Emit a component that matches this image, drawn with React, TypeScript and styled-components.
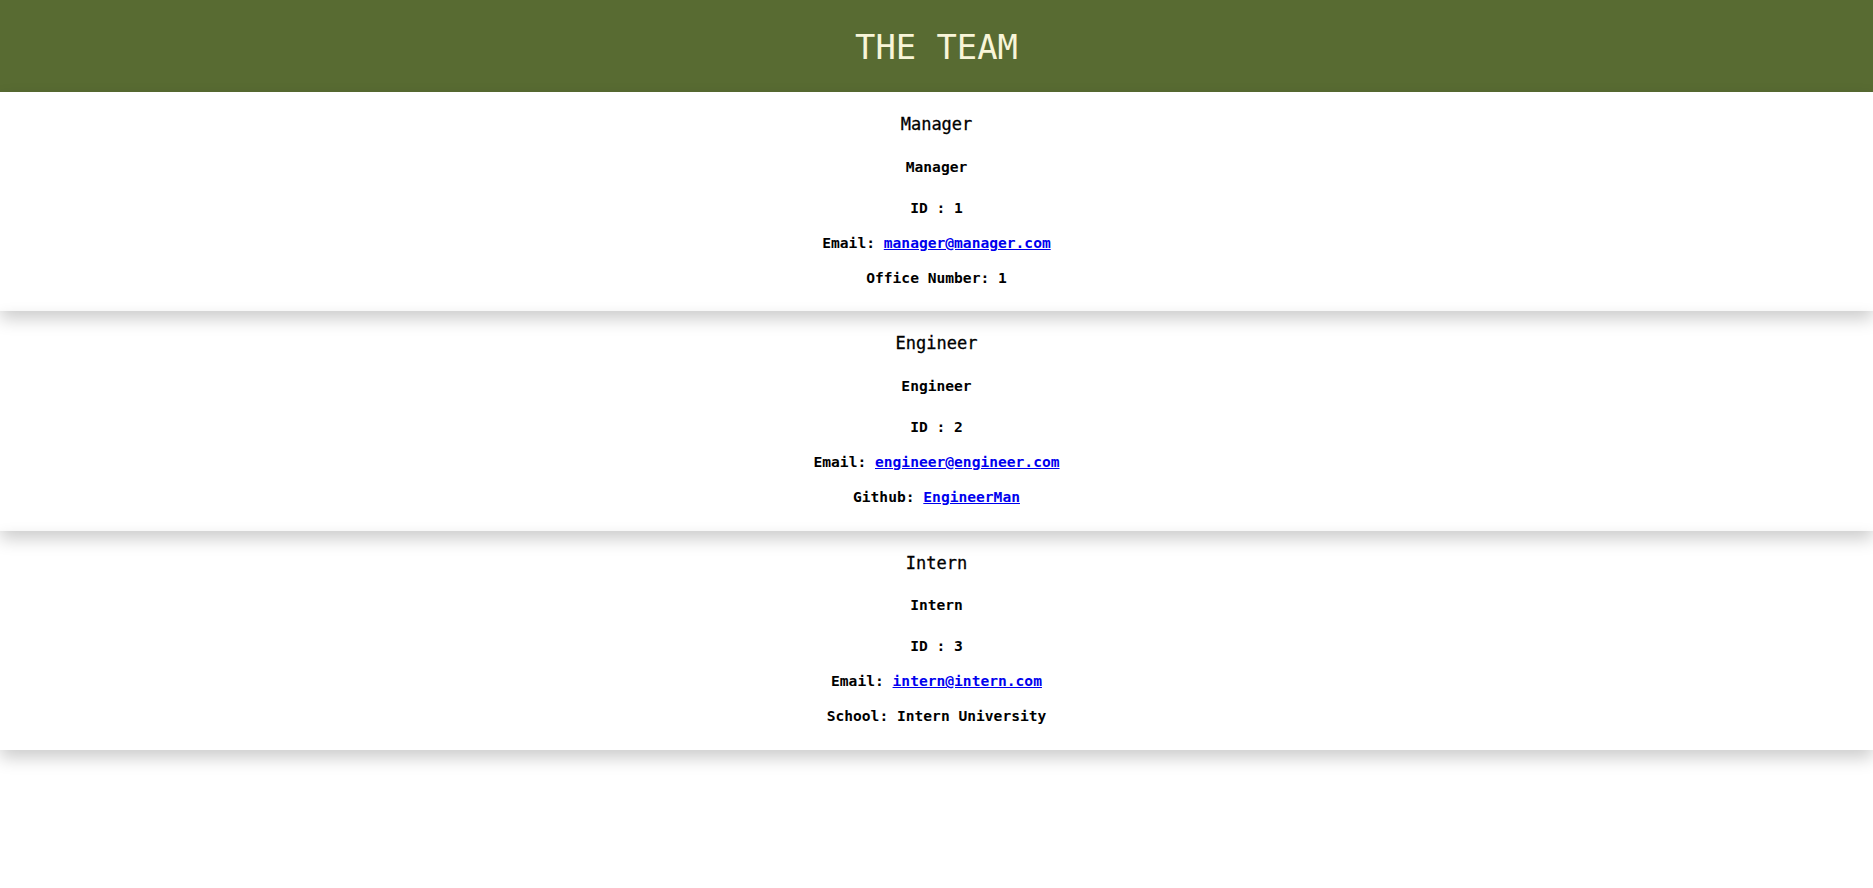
import React from "react";
import styled, { createGlobalStyle } from "styled-components";

const Global = createGlobalStyle`
  html, body { margin: 0; padding: 0; background: #ffffff; }
  body {
    font-family: "DejaVu Sans Mono", "Liberation Mono", monospace;
    color: #000;
    min-height: 100vh;
  }
`;

const Page = styled.div`
  min-height: 100vh;
  display: flex;
  flex-direction: column;
`;

const Header = styled.header`
  background: #586b32;
  height: 92px;
  flex-shrink: 0;
  display: flex;
  align-items: center;
  justify-content: center;
`;

const Title = styled.h1`
  margin: 0;
  font-size: 33.8px;
  font-weight: normal;
  color: #f8f5d8;
  padding-top: 2px;
`;

const List = styled.main`
  display: flex;
  flex-direction: column;
  padding-bottom: 40px;
`;

const Card = styled.section`
  height: 219.3px;
  box-sizing: border-box;
  padding-top: 21px;
  display: flex;
  flex-direction: column;
  align-items: center;
  box-shadow: 0 8px 16px 0 rgba(0, 0, 0, 0.2);
  text-align: center;
`;

const Name = styled.h2`
  margin: 0;
  font-size: 17px;
  line-height: 22px;
  font-weight: normal;
  -webkit-text-stroke: 0.3px #000;
`;

const Role = styled.h3`
  margin: 21.5px 0 0;
  font-size: 14.6px;
  line-height: 19px;
  font-weight: bold;
`;

const Line = styled.p<{ $gap?: number }>`
  margin: ${(p) => p.$gap ?? 16}px 0 0;
  font-size: 14.6px;
  line-height: 19px;
  font-weight: bold;
`;

const Link = styled.a`
  color: #0000ee;
  text-decoration: underline;
`;

type Member = {
  name: string;
  role: string;
  id: number;
  email: string;
  extra: React.ReactNode;
};

const members: Member[] = [
  {
    name: "Manager",
    role: "Manager",
    id: 1,
    email: "manager@manager.com",
    extra: <>Office Number: 1</>,
  },
  {
    name: "Engineer",
    role: "Engineer",
    id: 2,
    email: "engineer@engineer.com",
    extra: (
      <>
        Github: <Link href="#">EngineerMan</Link>
      </>
    ),
  },
  {
    name: "Intern",
    role: "Intern",
    id: 3,
    email: "intern@intern.com",
    extra: <>School: Intern University</>,
  },
];

export default function App() {
  return (
    <Page>
      <Global />
      <Header>
        <Title>THE TEAM</Title>
      </Header>
      <List>
        {members.map((m) => (
          <Card key={m.id}>
            <Name>{m.name}</Name>
            <Role>{m.role}</Role>
            <Line $gap={22}>ID : {m.id}</Line>
            <Line>
              Email: <Link href={`mailto:${m.email}`}>{m.email}</Link>
            </Line>
            <Line>{m.extra}</Line>
          </Card>
        ))}
      </List>
    </Page>
  );
}
